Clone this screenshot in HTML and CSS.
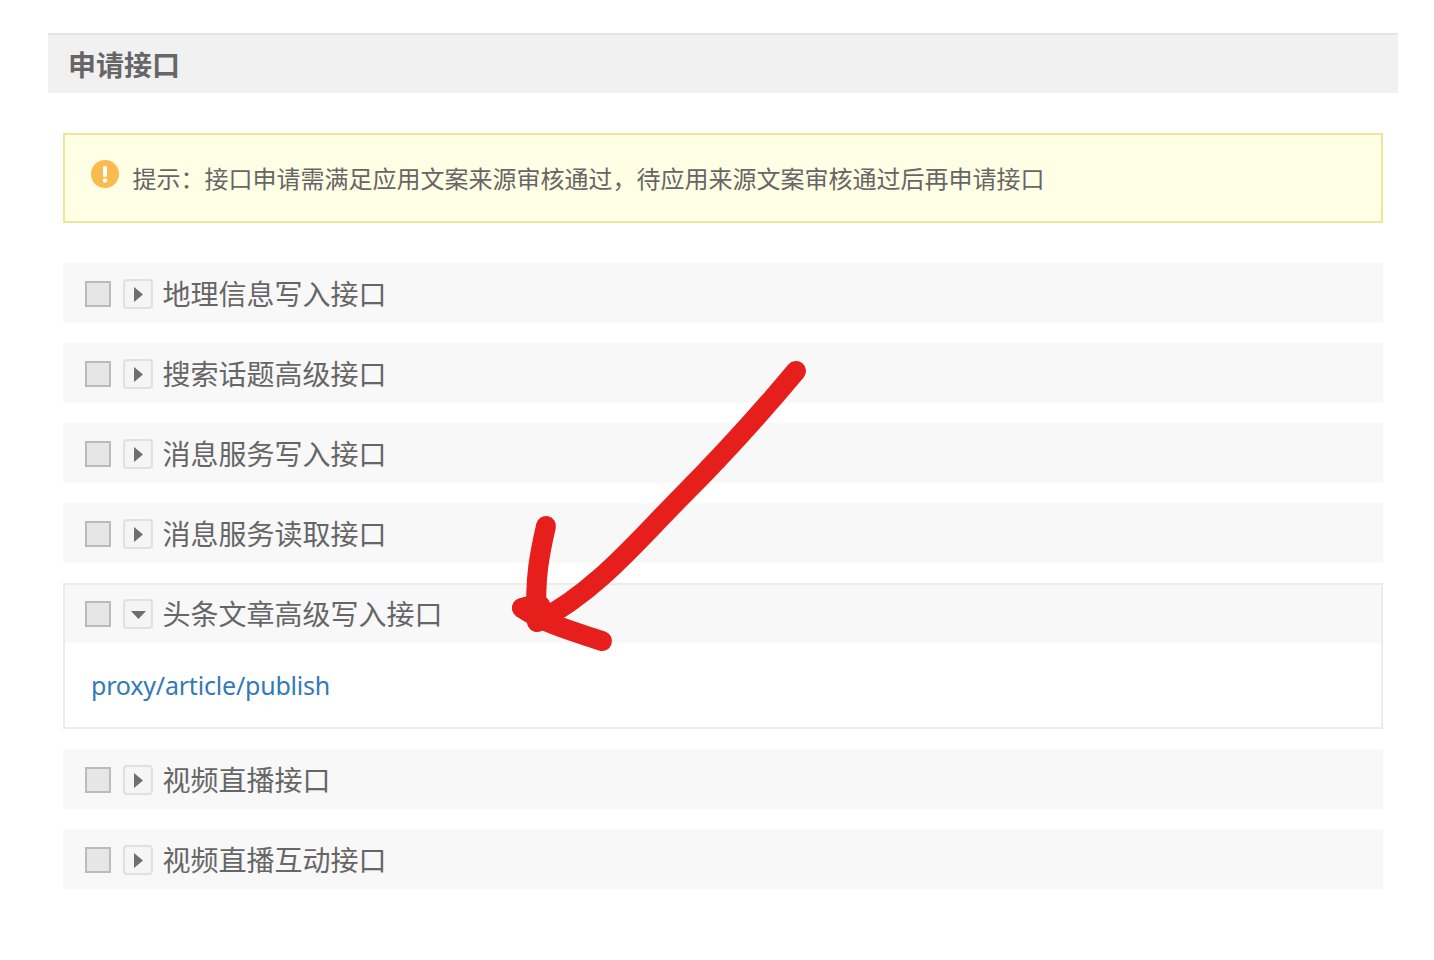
FILE: index.html
```html
<!DOCTYPE html>
<html lang="zh-CN">
<head>
<meta charset="utf-8">
<title>申请接口</title>
<link rel="stylesheet" href="styles.css">
</head>
<body>
<main class="panel">
  <h2 class="panel-title">申请接口</h2>
  <div class="panel-body">
    <div class="notice">
      <svg class="notice-icon" viewBox="0 0 28 28" aria-hidden="true"><circle cx="14" cy="14" r="14" fill="#fbbb4e"/><rect x="12" y="6" width="4" height="11" rx="1.5" fill="#fff"/><circle cx="14" cy="20.5" r="2.2" fill="#fff"/></svg>
      <span>提示：接口申请需满足应用文案来源审核通过，待应用来源文案审核通过后再申请接口</span>
    </div>
    <ul class="api-list">
      <li class="api"><div class="api-head"><span class="check"></span><span class="toggle"><svg viewBox="0 0 26 26"><path d="M9 6l9 7.500-9 7.500z"/></svg></span><span class="api-name">地理信息写入接口</span></div></li>
      <li class="api"><div class="api-head"><span class="check"></span><span class="toggle"><svg viewBox="0 0 26 26"><path d="M9 6l9 7.500-9 7.500z"/></svg></span><span class="api-name">搜索话题高级接口</span></div></li>
      <li class="api"><div class="api-head"><span class="check"></span><span class="toggle"><svg viewBox="0 0 26 26"><path d="M9 6l9 7.500-9 7.500z"/></svg></span><span class="api-name">消息服务写入接口</span></div></li>
      <li class="api"><div class="api-head"><span class="check"></span><span class="toggle"><svg viewBox="0 0 26 26"><path d="M9 6l9 7.500-9 7.500z"/></svg></span><span class="api-name">消息服务读取接口</span></div></li>
      <li class="api api-open"><div class="api-head"><span class="check"></span><span class="toggle"><svg viewBox="0 0 26 26"><path d="M6 10h15l-7.500 8z"/></svg></span><span class="api-name">头条文章高级写入接口</span></div>
        <div class="api-detail"><a class="api-link" href="#">proxy/article/publish</a></div></li>
      <li class="api"><div class="api-head"><span class="check"></span><span class="toggle"><svg viewBox="0 0 26 26"><path d="M9 6l9 7.500-9 7.500z"/></svg></span><span class="api-name">视频直播接口</span></div></li>
      <li class="api"><div class="api-head"><span class="check"></span><span class="toggle"><svg viewBox="0 0 26 26"><path d="M9 6l9 7.500-9 7.500z"/></svg></span><span class="api-name">视频直播互动接口</span></div></li>
    </ul>
  </div>
</main>
<svg class="annotation" viewBox="0 0 1434 960" aria-hidden="true">
  <g fill="none" stroke="#e71f1c" stroke-width="20" stroke-linecap="round" stroke-linejoin="round">
    <path d="M796 371C760 414 722 456 680 498C640 538 596 592 537 622"/>
    <path d="M546 526C540 552 534 580 537 620"/>
    <path d="M522 608L537 604"/>
    <path d="M522 608C545 624 575 632 602 641"/>
  </g>
  <circle cx="537" cy="608" r="14" fill="#e71f1c"/>
</svg>
</body>
</html>
```
FILE: styles.css
```css
* { box-sizing: border-box; }
html, body { margin: 0; padding: 0; background: #fff; }
body {
  height: 960px;
  overflow: hidden;
  position: relative;
  font-family: "Noto Sans CJK SC", "Noto Sans", sans-serif;
  color: #666;
}
.panel { margin: 33px 36px 0 48px; }
.panel-title {
  margin: 0;
  height: 60px;
  padding-left: 20px;
  border-top: 2px solid #e5e5e5;
  background: #f1f1f1;
  font-size: 28px;
  font-weight: 700;
  line-height: 58px;
  color: #666;
}
.panel-body { padding: 40px 15px 0; }
.notice {
  display: flex;
  align-items: center;
  gap: 13.5px;
  height: 90px;
  padding: 0 26px;
  border: 2px solid #efe69b;
  background: #ffffe5;
  font-size: 24px;
}
.notice span { position: relative; top: -1px; }
.notice-icon { width: 28px; height: 28px; flex: none; position: relative; top: -4px; }
.api-list {
  list-style: none;
  margin: 40px 0 0;
  padding: 0;
  display: flex;
  flex-direction: column;
  gap: 20px;
}
.api-head {
  display: flex;
  align-items: center;
  height: 60px;
  padding-left: 22px;
  background: #f8f8f8;
}
.check {
  width: 26px;
  height: 26px;
  flex: none;
  margin-top: 2px;
  border: 2px solid #bbb;
  background: #e6e6e6;
}
.toggle {
  width: 30px;
  height: 30px;
  flex: none;
  margin: 2px 9.5px 0 12px;
  border: 2px solid #e0e0e0;
  border-radius: 4px;
  background: #f5f5f5;
}
.toggle svg { display: block; width: 26px; height: 26px; fill: #6e6e6e; }
.api-name { font-size: 28px; line-height: 60px; white-space: nowrap; }
.api-open { border: 2px solid #ececec; }
.api-open .api-head { height: 58px; padding-left: 20px; }
.api-open .check { margin-top: 0; }
.api-open .toggle { margin-top: 0; }
.api-open .api-name { margin-top: -2px; }
.api-detail { height: 84px; padding: 0 26px; display: flex; align-items: center; }
.api-link {
  font-family: "Noto Sans", sans-serif;
  font-size: 25px;
  letter-spacing: -0.2px;
  color: #337ab7;
  text-decoration: none;
}
.annotation { position: absolute; left: 0; top: 0; width: 1434px; height: 960px; pointer-events: none; }
```
